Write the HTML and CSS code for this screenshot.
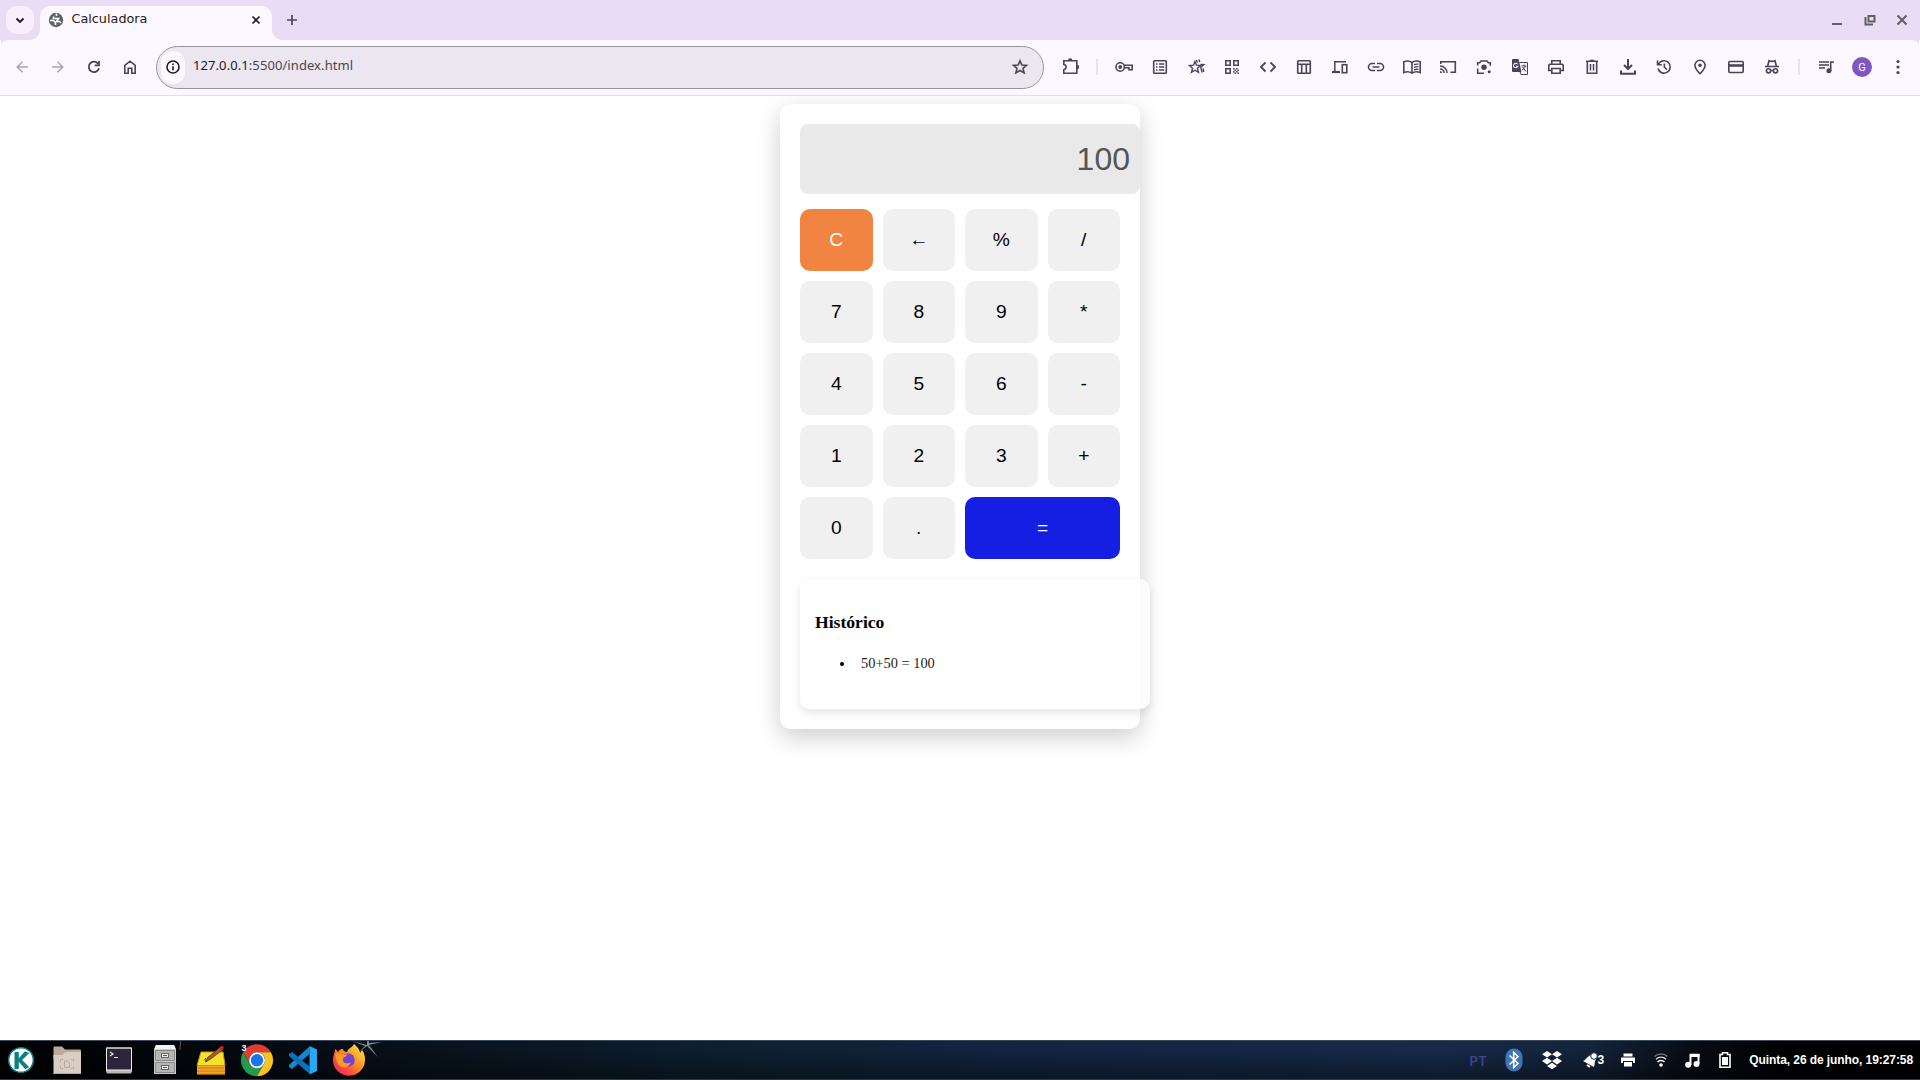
FILE: index.html
```html
<!DOCTYPE html>
<html lang="pt-BR">
<head>
<meta charset="utf-8">
<title>Calculadora</title>
<link rel="stylesheet" href="styles.css">
</head>
<body>
<header class="tabstrip">
  <div class="tab-search"><svg class="i" viewBox="0 0 20 20"><path d="M6.500 8.500l3.500 3.500 3.500-3.500" stroke-width="1.900"/></svg></div>
  <div class="tab">
    <svg class="favicon" viewBox="0 0 16 16"><circle cx="8" cy="8" r="7.200" fill="#5f6368"/><path d="M2 8.500h3.500l2 2v2.500M5.500 4.500v2h5l-2 3h3l1.500 1.500M8.500 1.500v2.500" fill="none" stroke="#fdf7ff" stroke-width="1.700"/></svg>
    <span class="tab-title">Calculadora</span>
    <svg class="tab-close" viewBox="0 0 16 16"><path d="M4.500 4.500l7 7M11.500 4.500l-7 7"/></svg>
  </div>
  <svg class="new-tab" viewBox="0 0 20 20"><path d="M10 5v10M5 10h10"/></svg>
  <div class="window-controls">
    <svg viewBox="0 0 16 16"><path d="M3 12h10"/></svg>
    <svg viewBox="0 0 16 16"><path d="M3.500 5v7.500H11M6.500 4h6v5.500h-6z"/></svg>
    <svg viewBox="0 0 16 16"><path d="M3.500 3.500l9 9M12.500 3.500l-9 9"/></svg>
  </div>
</header>
<nav class="toolbar">
  <div class="nav-buttons">
    <span class="cell off"><svg class="i" viewBox="0 0 20 20"><path d="M16 10H5M10.500 4.800L5.300 10l5.200 5.200"/></svg></span>
    <span class="cell off"><svg class="i" viewBox="0 0 20 20"><path d="M4 10H15M9.500 4.800l5.200 5.200-5.200 5.200"/></svg></span>
    <span class="cell"><svg class="i" viewBox="0 0 20 20"><path d="M15 11.300A5.200 5.200 0 1 1 14 6.600M15 4v4.300h-4.300" stroke-width="1.800"/></svg></span>
    <span class="cell"><svg class="i" viewBox="0 0 20 20"><path d="M4.800 8.300L10 4.200l5.200 4.100v7.900h-3.400v-5H8.200v5H4.800z"/></svg></span>
  </div>
  <div class="address">
    <span class="site-info"><svg class="i" viewBox="0 0 20 20"><circle cx="10" cy="10" r="6"/><path d="M10 9.300v4M10 6.500v1.600"/></svg></span>
    <span class="url"><b>127.0.0.1</b>:5500/index.html</span>
    <svg class="i bookmark" viewBox="0 0 20 20"><path d="M10 3.800l1.900 4.200 4.600.4-3.500 3 1.100 4.500L10 13.500l-4.100 2.400L7 11.400l-3.500-3 4.600-.4z"/></svg>
  </div>
  <div class="actions">
    <span class="cell"><svg class="i" viewBox="0 0 20 20"><path d="M3.800 3.800h13v12.400h-13v-3.500c1.500-.2 2.300-1.100 2.300-2.600s-.8-2.400-2.300-2.600z"/><path class="f" d="M8 3.500a2.200 2.200 0 0 1 4.400 0zM17 7.800a2.200 2.200 0 0 1 0 4.400z"/></svg></span>
    <span class="divider"></span>
    <span class="cell"><svg class="i" viewBox="0 0 20 20"><circle cx="6.200" cy="10" r="4.200"/><circle class="f" cx="6.200" cy="10" r="1.900"/><path d="M10.200 8.300h8v4.400h-3.200v-1.900h-4.800"/></svg></span>
    <span class="cell"><svg class="i" viewBox="0 0 20 20"><rect x="3.700" y="3.700" width="12.600" height="12.600" rx=".8"/><path d="M6 7h1.500M9 7h5.200M6 10h1.500M9 10h5.200M6 13h1.500M9 13h5.200" stroke-width="1.300"/></svg></span>
    <span class="cell"><svg class="i" viewBox="0 0 20 20"><path d="M9 4.500l1.500 3.700 4 .4-3 2.700 1 4L9 13.200l-3.500 2.100 1-4-3-2.700 4-.4zM10.300 3l1.200 2.500M12.800 2.500l1 2.500M14.500 7.500l3.300.2-3 2.500 1.200 5.300M17 11.500l.8 3.500" stroke-width="1.400"/></svg></span>
    <span class="cell"><svg class="i" viewBox="0 0 20 20"><path d="M3.800 3.800h4.400v4.400H3.800zM11.800 3.800h4.400v4.400h-4.400zM3.800 11.800h4.400v4.400H3.800z"/><path class="f" d="M11 11h1.500v1.500H11zM14 11h1.500v1.500H14zM12.500 12.500H14V14h-1.500zM15.500 12.500H17V14h-1.500zM11 14h1.500v1.500H11zM14 14h1.500v1.500H14zM12.500 15.500H14V17h-1.500zM15.500 15.500H17V17h-1.500z"/></svg></span>
    <span class="cell"><svg class="i" viewBox="0 0 20 20"><path d="M7.500 5.500L3 10l4.500 4.500M12.500 5.500L17 10l-4.500 4.500" stroke-width="1.800"/></svg></span>
    <span class="cell"><svg class="i" viewBox="0 0 20 20"><rect x="3.700" y="3.700" width="12.600" height="12.600" rx=".8"/><path d="M3.700 7.300h12.600M7.700 7.500v9M12.300 7.500v9"/></svg></span>
    <span class="cell"><svg class="i" viewBox="0 0 20 20"><path d="M16 4.800H4.800v9.900" stroke-width="1.500"/><path d="M2 15h8" stroke-width="2.200"/><rect x="12.300" y="7.700" width="4.500" height="8" /></svg></span>
    <span class="cell"><svg class="i" viewBox="0 0 20 20"><path d="M9 6.500H6a3.500 3.500 0 0 0 0 7h3M11 6.500h3a3.500 3.500 0 0 1 0 7h-3M6.500 10h7"/></svg></span>
    <span class="cell"><svg class="i" viewBox="0 0 20 20"><path d="M10 5.500C8 4 4.500 3.800 1.800 4.800v10.700c2.700-1 6.200-.8 8.200.7 2-1.500 5.500-1.700 8.200-.7V4.800C15.500 3.800 12 4 10 5.500zM10 5.500v10.700" /><path d="M12 7.700c1.300-.6 3-.8 4.500-.5M12 10.300c1.300-.6 3-.8 4.500-.5M12 12.900c1.300-.6 3-.8 4.500-.5" stroke-width="1.300"/></svg></span>
    <span class="cell"><svg class="i" viewBox="0 0 20 20"><path d="M2.800 7V4.700h14.500v10.600h-5M2 9a7 7 0 0 1 7 7M2 12a4 4 0 0 1 4 4"/><path class="f" d="M2 14a2 2 0 0 1 2 2H2z"/></svg></span>
    <span class="cell"><svg class="i" viewBox="0 0 20 20"><path d="M3.700 8.500v-2.800h2L7 4h6l1.300 1.700h2v3M3.700 11.500v4.700H10"/><circle class="f" cx="10" cy="10.300" r="2.700"/><circle class="f" cx="15.200" cy="14.800" r="1.500"/></svg></span>
    <span class="cell"><svg class="i" viewBox="0 0 20 20"><path class="f" d="M3 2h5.500l.8 3 2.200 10H3a1 1 0 0 1-1-1V3a1 1 0 0 1 1-1z"/><path d="M9.500 5.500h8v12h-6.500l-1-3M11.500 9h5M14 7.500V9M12 13c2-1 3-2 3.200-4M12.500 10l3.500 4.500" stroke-width="1"/><path d="M7.500 7.200a2.200 2.200 0 1 0 .3 2H6" stroke="#fdf7ff" stroke-width="1.100"/></svg></span>
    <span class="cell"><svg class="i" viewBox="0 0 20 20"><path d="M5.800 7V3.800h8.400V7M5.500 13.500H2.800V8.500a1.200 1.200 0 0 1 1.200-1.200h12a1.200 1.200 0 0 1 1.200 1.200v5h-2.700M5.800 11.500h8.400v4.700H5.800z"/></svg></span>
    <span class="cell"><svg class="i" viewBox="0 0 20 20"><path d="M5.300 5v11.200h9.400V5M4 4.300h12M8 3.500h4"/><path d="M8.500 7v6.500M11.500 7v6.500" stroke-width="1.500"/></svg></span>
    <span class="cell"><svg class="i" viewBox="0 0 20 20"><path d="M10 2v9M6 8l4 4 4-4M3 13.500v3.200h14v-3.200" stroke-width="2"/></svg></span>
    <span class="cell"><svg class="i" viewBox="0 0 20 20"><path d="M4.300 7.500A6.200 6.200 0 1 1 4 11.500M3.500 3.500v4.300h4.300M10.300 6.500V10l2.700 2.700"/></svg></span>
    <span class="cell"><svg class="i" viewBox="0 0 20 20"><path d="M10 16.800C6.500 13.300 4.900 10.700 4.900 8.300a5.100 5.100 0 0 1 10.200 0c0 2.400-1.600 5-5.100 8.500z"/><circle class="f" cx="10" cy="8.300" r="1.800"/></svg></span>
    <span class="cell"><svg class="i" viewBox="0 0 20 20"><rect x="2.800" y="4.500" width="14.400" height="11" rx="1"/><path d="M3 8.500h14" stroke-width="2.600"/></svg></span>
    <span class="cell"><svg class="i" viewBox="0 0 20 20"><path d="M3 9.500h14M5.700 9L7 3.700c1.500.7 4.500.7 6 0L14.300 9"/><circle cx="6.500" cy="13.800" r="2.100"/><circle cx="13.500" cy="13.800" r="2.100"/><path d="M8.500 13.500h3"/></svg></span>
    <span class="divider"></span>
    <span class="cell"><svg class="i" viewBox="0 0 20 20"><path d="M3 5h10M3 8h10M3 11h6M14.700 14V5H18"/><circle class="f" cx="12.900" cy="13.800" r="2.500"/></svg></span>
    <span class="cell"><span class="avatar">G</span></span>
    <span class="cell"><svg class="i" viewBox="0 0 20 20"><g class="f"><circle cx="10" cy="4.500" r="1.600"/><circle cx="10" cy="10" r="1.600"/><circle cx="10" cy="15.500" r="1.600"/></g></svg></span>
  </div>
</nav>
<main class="page">
  <section class="calculator">
    <div class="display">100</div>
    <div class="keys">
      <button class="clear">C</button><button>←</button><button>%</button><button>/</button>
      <button>7</button><button>8</button><button>9</button><button>*</button>
      <button>4</button><button>5</button><button>6</button><button>-</button>
      <button>1</button><button>2</button><button>3</button><button>+</button>
      <button>0</button><button>.</button><button class="equals">=</button>
    </div>
    <div class="history">
      <h3>Histórico</h3>
      <ul><li>50+50 = 100</li></ul>
    </div>
  </section>
</main>
<footer class="taskbar">
  <div class="launchers">
    <svg viewBox="0 0 46 38"><circle cx="21" cy="19" r="12.300" fill="#fff" stroke="#0b7f82" stroke-width="1.500"/><path d="M14.500 11h4.300v6.300l6.200-7 4.200 1.600-7 7.200 7 7.200-4 2-6.400-7.500v7.200h-4.300z" fill="#0b7f82"/></svg>
    <svg viewBox="0 0 46 38"><path d="M7.500 7c0-1 .5-1.500 1.500-1.500h7l3 3h15q1 0 1 1V18H7.500z" fill="#bba99c"/><path d="M7.500 14h9l3-3H35v22H7.500z" fill="#dacdc3"/><path d="M7.500 32.500H35" stroke="#bba99c"/><path d="M14.500 21v-2.500H17M25 18.500h2.500V21M14.500 25v2.500H17M25 27.500h2.500V25M18.500 20h3l2 2v4.500h-5z" fill="none" stroke="#bba99c"/></svg>
    <svg viewBox="0 0 46 38"><path d="M14 6.500h26v24l-1 2H15l-1-2z" fill="#b6b8ae"/><rect x="15" y="7.500" width="24" height="21.500" fill="#2b2639"/><path d="M14.500 29V7h25v22z" fill="none" stroke="#eee"/><path d="M18 11l3 2-3 2M22 16.500h4" fill="none" stroke="#eee" stroke-width="1.200"/></svg>
    <svg viewBox="0 0 46 38"><path d="M42.500 0l-.5 9" stroke="#515962"/><path d="M18 4h18l2 4v25H16V8z" fill="#c9cac7"/><path d="M18 4h18l1.500 4h-21z" fill="#f4f4f2"/><path d="M17.500 9.500h19v10h-19zM17.500 21.500h19v10h-19z" fill="#b5b6b3" stroke="#888"/><rect x="23.500" y="12.500" width="7" height="4" fill="#eee" stroke="#666"/><rect x="23.500" y="24.500" width="7" height="4" fill="#eee" stroke="#666"/><path d="M25 14.500h4M25 26.500h4" stroke="#555"/></svg>
    <svg viewBox="0 0 46 38"><path d="M13 24h28v9.500H13z" fill="#f5a623"/><path d="M13 27h28M13 30h28M13 33h28" stroke="#b87410" stroke-width=".8"/><path d="M17 11h22l2 13.500H13z" fill="#f5e229" stroke="#b99b08"/><path d="M22 17c-2.500 2 0 4.500 2 2" fill="none" stroke="#333"/><path d="M21.500 21l2-4.500L36 6.500l2.500 2.500L26 18.500z" fill="#a65d2b" stroke="#5a3013" stroke-width=".7"/><path d="M35 7l2-1.700c2-1 3.500.8 2.300 2.200L37.500 9.500z" fill="#d42020"/></svg>
    <svg viewBox="0 0 46 38"><g transform="translate(27 19.300)"><path d="M-13.900-8A16 16 0 0 1 13.900-8H0A8 8 0 0 0-6.930 4z" fill="#e33b2e"/><path d="M-13.900-8L-6.930 4A8 8 0 0 0 6.930 4L0 16A16 16 0 0 1-13.900-8z" fill="#239b4c"/><path d="M0 16L6.930 4A8 8 0 0 0 0-8H13.900A16 16 0 0 1 0 16z" fill="#fcc31e"/><circle r="8" fill="#fff"/><circle r="6.200" fill="#1a73e8"/></g><text class="count" x="11.500" y="9.500">3</text></svg>
    <svg viewBox="0 0 46 38"><path d="M33.500 5.500v7.500L16 28l-3-2 0-2z" fill="#1588d2"/><path d="M33.500 33v-7.500L16 11l-3 2v2z" fill="#0a71bd"/><path d="M33.500 5l7.500 3.500v21.500L33.500 33.500z" fill="#28a8f1"/></svg>
    <svg viewBox="0 0 60 38"><defs><linearGradient id="fox" x1="1" y1="0" x2="0" y2="1"><stop offset="0" stop-color="#fff44f"/><stop offset=".4" stop-color="#ff9a25"/><stop offset=".7" stop-color="#ff4b3a"/><stop offset="1" stop-color="#e31587"/></linearGradient></defs><path class="star" d="M45 4L30 0l13 5-7 7 9-7 11 11-9-12 13-3-13 1V0h-2z"/><path d="M32 3c2 2 6 5 6 9l2-3c4 5 4 14 0 19-8 12-29 7-29-9 0-5 2-7 2-11 2 1 3 3 3 3 2-3 3-3 5-3 0 2 2 3 4 3 1-4 5-4 7-8z" fill="url(#fox)"/><circle cx="26" cy="19" r="6.800" fill="#7443cf"/><path d="M13 13c3-2 6 1 9 1l3-1c0 3-4 3-4 5-1 4 5 6 8 3-2 7-12 7-14 0z" fill="#ff9a25"/></svg>
  </div>
  <div class="tray">
    <span class="lang">PT</span>
    <svg class="bt" viewBox="0 0 18 24"><rect x=".5" y=".5" width="17" height="23" rx="8.500" fill="#3f74b5"/><path d="M4.500 7.500l8.500 8-4.300 4V4.500l4.300 4-8.500 8" fill="none" stroke="#fff" stroke-width="1.600"/></svg>
    <svg class="box" viewBox="0 0 22 20"><path d="M6 1l5 3.300-5 3.300-5-3.300zM16 1l5 3.300-5 3.300-5-3.300zM6 7.800l5 3.300-5 3.300-5-3.300zM16 7.800l5 3.300-5 3.300-5-3.300zM11 12.700l5 3.200-5 3.300-5-3.300z" fill="#fff"/></svg>
    <span class="alerts"><svg viewBox="0 0 16 16"><path d="M1 9c3-1 5-6 10-7l3 5c-2 4-1 6-2 8z" fill="#fff"/><circle cx="12" cy="4" r="3.300" fill="#fff" stroke="#13233a"/><path d="M5 13l3 2" stroke="#fff" stroke-width="2"/></svg>3</span>
    <svg class="prn" viewBox="0 0 14 14"><path d="M2.500.5h9v3h-9zM0 4.500h14v5.500h-2v-2H2v2H0zM3 9h8v4.500H3z" fill="#fff"/></svg>
    <svg class="wifi" viewBox="0 0 14 14"><circle cx="7" cy="12" r="1.800" fill="#fff"/><path d="M3.500 9a4.600 4.600 0 0 1 7 0" fill="none" stroke="#fff" stroke-width="1.500"/><path d="M2 6.300a7 7 0 0 1 10 0" fill="none" stroke="#ddd" stroke-width="1.300"/><path d="M.5 3.500a9.500 9.500 0 0 1 13 0" fill="none" stroke="#68717c" stroke-width="1.500"/></svg>
    <svg class="mus" viewBox="0 0 15 15"><path d="M5.500 12V1.800h8v9" fill="none" stroke="#fff" stroke-width="2"/><path d="M5 1h9.500v3H5z" fill="#fff"/><circle cx="3.200" cy="11.700" r="3" fill="#fff"/><circle cx="11.500" cy="11" r="3" fill="#fff"/></svg>
    <svg class="bat" viewBox="0 0 12 16"><path d="M1 2.500h2.500v-1.700h5v1.700H11v12.700H1z" fill="none" stroke="#fff" stroke-width="1.600"/><path d="M3 5h6v8H3z" fill="#fff"/></svg>
    <span class="clock">Quinta, 26 de junho, 19:27:58</span>
  </div>
</footer>
</body>
</html>
```
FILE: styles.css
```css
* { box-sizing: border-box; }
body {
  margin: 0;
  height: 1080px;
  display: flex;
  flex-direction: column;
  overflow: hidden;
  background: #fff;
  font-family: "Liberation Serif", serif;
}
svg { display: block; flex: none; }

.tabstrip {
  height: 40px;
  flex: none;
  display: flex;
  align-items: center;
  padding-left: 6px;
  background: #e9dcf5;
}
.tab-search {
  width: 28px;
  height: 28px;
  border-radius: 10px;
  background: #f8effe;
  display: grid;
  place-items: center;
  color: #1d1b20;
}
.tab {
  width: 232px;
  height: 34px;
  margin: 6px 0 0 6px;
  padding: 0 8px 6px 8px;
  display: flex;
  align-items: center;
  border-radius: 10px 10px 0 0;
  background: #fdf7ff;
  position: relative;
}
.tab::before, .tab::after {
  content: "";
  position: absolute;
  bottom: 0;
  width: 10px;
  height: 10px;
}
.tab::before { left: -10px; background: radial-gradient(circle at 0 0, transparent 9.500px, #fdf7ff 10px); }
.tab::after { right: -10px; background: radial-gradient(circle at 100% 0, transparent 9.500px, #fdf7ff 10px); }
.favicon { width: 16px; height: 16px; }
.tab-title {
  flex: 1;
  margin-left: 7.500px;
  padding-bottom: 3px;
  font: 12.800px "DejaVu Sans", sans-serif;
  color: #1d1b20;
}
.tab-close { width: 16px; height: 16px; stroke: #1d1b20; stroke-width: 1.600; }
.new-tab { width: 20px; height: 20px; margin-left: 10px; stroke: #4a4458; stroke-width: 1.700; }
.window-controls { margin-left: auto; display: flex; gap: 16.500px; padding-right: 10px; }
.window-controls svg { width: 16px; height: 16px; fill: none; stroke: #605f68; stroke-width: 2; }

.toolbar {
  height: 56px;
  flex: none;
  display: flex;
  align-items: center;
  padding: 0 4px 1px;
  border-bottom: 1px solid #e3dde8;
  background: #fdf7ff;
  border-top-left-radius: 8px;
  border-top-right-radius: 8px;
  box-shadow: 0 -8px 0 -1px #e9dcf5;
  color: #4a4458;
}
.tabstrip, .tab { z-index: 1; }
.i { width: 20px; height: 20px; fill: none; stroke: currentColor; stroke-width: 1.600; }
.i .f { fill: currentColor; stroke: none; }
.nav-buttons, .actions { display: flex; align-items: center; }
.cell { width: 36px; height: 36px; display: grid; place-items: center; }
.off { color: #aba5b0; }
.address {
  width: 888px;
  height: 43px;
  margin-left: 8px;
  padding: 0 13px 0 4px;
  display: flex;
  align-items: center;
  border: 1px solid #99959e;
  border-radius: 22px;
  background: #ece6f0;
}
.site-info {
  width: 24px;
  height: 33px;
  border-radius: 12px;
  display: grid;
  place-items: center;
  background: #fdf7ff;
  color: #1d1b20;
}
.url {
  flex: 1;
  margin-left: 8px;
  padding-bottom: 5px;
  font: 13px "Noto Sans", sans-serif;
  letter-spacing: .08px;
  color: #49454f;
}
.url b { font-weight: 400; color: #1d1b20; }
.bookmark { color: #49454f; }
.actions { margin-left: 8px; }
.divider { width: 2px; height: 16px; margin: 0 8px; background: #e8ddfb; }
.avatar {
  width: 20px;
  height: 20px;
  border-radius: 50%;
  display: grid;
  place-items: center;
  background: #7e57c2;
  color: #fff;
  font: 11px Roboto, sans-serif;
}

.page { flex: 1; min-height: 0; overflow: hidden; padding-top: 8px; }
.calculator {
  width: 360px;
  margin: 0 auto;
  padding: 20px;
  border-radius: 10px;
  background: #fff;
  box-shadow: 0 8px 24px rgba(0, 0, 0, .2);
}
.display {
  width: 340px;
  height: 70px;
  padding: 10px;
  border-radius: 8px;
  background: #e9e9e9;
  color: #555;
  text-align: right;
  font: 32px/50px "Liberation Sans", sans-serif;
}
.keys {
  margin-top: 15px;
  display: grid;
  grid-template-columns: repeat(4, 1fr);
  gap: 10px;
}
.keys button {
  height: 62px;
  padding: 0;
  border: 0;
  border-radius: 10px;
  background: #f0f0f0;
  color: #000;
  font: 19.200px "Liberation Sans", sans-serif;
}
.keys .clear { background: #f08440; color: #fff; }
.keys .equals { grid-column: span 2; background: #141fe3; color: #fff; }
.history {
  width: 350px;
  height: 130px;
  margin-top: 20px;
  padding: 15px;
  border-radius: 10px;
  background: rgba(255, 255, 255, .8);
  box-shadow: 0 4px 10px rgba(0, 0, 0, .1);
}
.history h3 { margin: 17.600px 0; font-size: 17.600px; line-height: 20px; }
.history ul { margin: 0; padding-left: 40px; }
.history li { padding: 6px; font-size: 14.400px; line-height: 17px; color: #222; }
.history li::marker { color: #000; }

.taskbar {
  height: 40px;
  flex: none;
  display: flex;
  justify-content: space-between;
  border-top: 1px solid #3c4b5b;
  border-bottom: 1px solid #34383c;
  background:
    linear-gradient(rgba(0, 0, 0, 0) 20%, rgba(0, 0, 0, .4)),
    linear-gradient(90deg, #000 0, #050a12 14%, #08121c 22%, #0e2030 38%, #122440 52%, #172a48 75%, #13233a 83%, #080d14 88%, #000 93%);
  color: #fff;
}
.launchers { display: flex; }
.launchers svg { width: 46px; height: 38px; }
.launchers svg:last-child { width: 60px; }
.count { font: bold 9px "Liberation Sans", sans-serif; fill: #fff; }
.star { fill: #7d868d; }
.tray {
  display: flex;
  align-items: center;
  padding-right: 7px;
  font: bold 12px "Liberation Sans", sans-serif;
}
.lang { color: #424494; font: 500 15px "Noto Sans", sans-serif; }
.bt { width: 18px; height: 24px; margin-left: 18px; }
.box { width: 22px; height: 20px; margin-left: 18px; }
.alerts { display: flex; align-items: center; margin-left: 19px; }
.alerts svg { width: 16px; height: 16px; }
.prn { width: 14px; height: 14px; margin-left: 17px; }
.wifi { width: 14px; height: 14px; margin-left: 19px; }
.mus { width: 15px; height: 15px; margin-left: 17px; }
.bat { width: 12px; height: 16px; margin-left: 19px; }
.clock { margin-left: 18px; letter-spacing: -.08px; }
```
